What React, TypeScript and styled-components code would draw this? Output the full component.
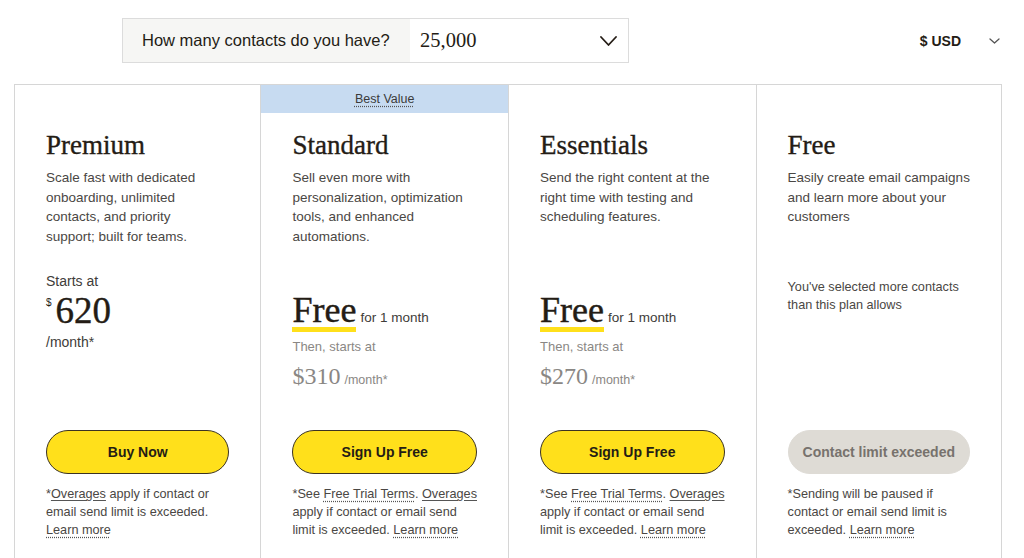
import React from "react";
import styled, { createGlobalStyle } from "styled-components";

const GlobalStyle = createGlobalStyle`
  html, body {
    margin: 0;
    padding: 0;
    overflow: hidden;
    background: #ffffff;
  }
  body {
    font-family: "Liberation Sans", Arial, sans-serif;
    color: #241c15;
  }
  * {
    box-sizing: border-box;
  }
`;

const SERIF = `"Liberation Serif", "Times New Roman", serif`;

type PlanKind = "starts" | "trial" | "limit";

interface Plan {
  name: string;
  description: string[];
  featured?: boolean;
  kind: PlanKind;
  price?: string;
  thenPrice?: string;
  button: string;
  disabled?: boolean;
  note: React.ReactNode;
}

const TopBar = styled.div`
  display: flex;
  align-items: center;
  justify-content: space-between;
  padding: 18px 24px 0 122px;
  width: 1024px;
`;

const ContactSelect = styled.div`
  display: flex;
  height: 45px;
  border: 1px solid #dcdcdc;
`;

const SelectLabel = styled.div`
  display: flex;
  align-items: center;
  width: 287px;
  padding-left: 19px;
  background: #f6f6f4;
  font-size: 16.5px;
  color: #241c15;
`;

const SelectValue = styled.div`
  display: flex;
  align-items: center;
  justify-content: space-between;
  width: 218px;
  padding: 0 11px 0 10px;
  font-family: ${SERIF};
  font-size: 20.5px;
  color: #241c15;
`;

const Currency = styled.div`
  display: flex;
  align-items: center;
  gap: 28px;
  font-size: 14px;
  font-weight: 700;
  color: #241c15;
`;

const Plans = styled.div`
  display: grid;
  grid-template-columns: repeat(4, 1fr);
  width: 988px;
  margin: 21px 0 0 14px;
  border: 1px solid #d6d6d6;
`;

const Column = styled.div`
  display: flex;
  flex-direction: column;
  padding: 0 31px 30px;
  & + & {
    border-left: 1px solid #d6d6d6;
  }
`;

const BannerSlot = styled.div<{ $show: boolean }>`
  display: flex;
  align-items: center;
  justify-content: center;
  height: 28px;
  margin: 0 -31px;
  background: ${({ $show }) => ($show ? "#c7dbf1" : "transparent")};
  font-size: 12.5px;
  color: #3a3a3a;
`;

const Dotted = styled.span`
  text-decoration: underline dotted #555;
  text-underline-offset: 3px;
`;

const Solid = styled.span`
  text-decoration: underline solid #555;
  text-underline-offset: 2px;
`;

const Title = styled.h2`
  margin: 16px 0 0;
  font-family: ${SERIF};
  font-weight: 400;
  font-size: 27px;
  line-height: 32px;
  color: #241c15;
  -webkit-text-stroke: 0.35px #241c15;
`;

const Description = styled.p`
  margin: 7px 0 0;
  height: 78px;
  font-size: 13.5px;
  line-height: 19.5px;
  color: #4a4744;
`;

const PriceArea = styled.div<{ $kind: PlanKind }>`
  height: 184px;
  padding-top: ${({ $kind }) =>
    $kind === "starts" ? "25px" : $kind === "trial" ? "47px" : "32px"};
`;

const StartsLabel = styled.div`
  font-size: 14px;
  line-height: 20px;
  color: #403c39;
`;

const BigPrice = styled.div`
  display: flex;
  align-items: flex-start;
  height: 40px;
  font-family: ${SERIF};
  font-size: 37px;
  line-height: 40px;
  color: #241c15;
  -webkit-text-stroke: 0.4px #241c15;
`;

const Sup = styled.span`
  font-family: "Liberation Sans", Arial, sans-serif;
  font-size: 10px;
  line-height: 20px;
  margin-top: 2px;
  margin-right: 4px;
  -webkit-text-stroke: 0;
`;

const PerMonth = styled.div`
  font-size: 14px;
  line-height: 22px;
  color: #403c39;
`;

const FreeRow = styled.div`
  display: flex;
  align-items: baseline;
  gap: 4px;
`;

const FreeWord = styled.span`
  display: inline-block;
  font-family: ${SERIF};
  font-size: 36px;
  line-height: 34px;
  color: #241c15;
  -webkit-text-stroke: 0.45px #241c15;
  border-bottom: 5px solid #ffe01b;
`;

const FreeFor = styled.span`
  font-size: 13.5px;
  color: #403c39;
`;

const ThenLabel = styled.div`
  margin-top: 6px;
  font-size: 13px;
  line-height: 18px;
  color: #8a8784;
`;

const ThenRow = styled.div`
  display: flex;
  align-items: baseline;
  gap: 4px;
  margin-top: 5px;
`;

const ThenPrice = styled.span`
  font-family: ${SERIF};
  font-size: 24px;
  line-height: 30px;
  color: #8a8784;
`;

const ThenPer = styled.span`
  font-size: 12.5px;
  color: #8a8784;
`;

const LimitText = styled.p`
  margin: 0;
  font-size: 12.7px;
  line-height: 18px;
  color: #4a4744;
`;

const ActionButton = styled.button<{ $disabled?: boolean }>`
  height: 44px;
  width: 100%;
  border-radius: 22px;
  border: 1px solid ${({ $disabled }) => ($disabled ? "#dedbd5" : "#3b3322")};
  background: ${({ $disabled }) => ($disabled ? "#dedbd5" : "#ffe01b")};
  color: ${({ $disabled }) => ($disabled ? "#77726d" : "#241c15")};
  font-family: "Liberation Sans", Arial, sans-serif;
  font-size: 14px;
  font-weight: 700;
  cursor: ${({ $disabled }) => ($disabled ? "default" : "pointer")};
`;

const Footnote = styled.p`
  margin: 11px 0 0;
  font-size: 12.7px;
  line-height: 18px;
  color: #4a4744;
  white-space: nowrap;
`;

const Chevron = ({ width, height, stroke, color }: { width: number; height: number; stroke: number; color: string }) => (
  <svg width={width} height={height} viewBox={`0 0 ${width} ${height}`} fill="none">
    <polyline
      points={`1,1 ${width / 2},${height - 1} ${width - 1},1`}
      stroke={color}
      strokeWidth={stroke}
      strokeLinecap="round"
      strokeLinejoin="round"
    />
  </svg>
);

const plans: Plan[] = [
  {
    name: "Premium",
    description: ["Scale fast with dedicated", "onboarding, unlimited", "contacts, and priority", "support; built for teams."],
    kind: "starts",
    price: "620",
    button: "Buy Now",
    note: (
      <>
        *<Solid>Overages</Solid> apply if contact or
        <br />
        email send limit is exceeded.
        <br />
        <Dotted>Learn more</Dotted>
      </>
    ),
  },
  {
    name: "Standard",
    description: ["Sell even more with", "personalization, optimization", "tools, and enhanced", "automations."],
    featured: true,
    kind: "trial",
    thenPrice: "$310",
    button: "Sign Up Free",
    note: (
      <>
        *See <Dotted>Free Trial Terms</Dotted>. <Solid>Overages</Solid>
        <br />
        apply if contact or email send
        <br />
        limit is exceeded. <Dotted>Learn more</Dotted>
      </>
    ),
  },
  {
    name: "Essentials",
    description: ["Send the right content at the", "right time with testing and", "scheduling features."],
    kind: "trial",
    thenPrice: "$270",
    button: "Sign Up Free",
    note: (
      <>
        *See <Dotted>Free Trial Terms</Dotted>. <Solid>Overages</Solid>
        <br />
        apply if contact or email send
        <br />
        limit is exceeded. <Dotted>Learn more</Dotted>
      </>
    ),
  },
  {
    name: "Free",
    description: ["Easily create email campaigns", "and learn more about your", "customers"],
    kind: "limit",
    button: "Contact limit exceeded",
    disabled: true,
    note: (
      <>
        *Sending will be paused if
        <br />
        contact or email send limit is
        <br />
        exceeded. <Dotted>Learn more</Dotted>
      </>
    ),
  },
];

const PriceBlock = ({ plan }: { plan: Plan }) => {
  if (plan.kind === "starts") {
    return (
      <>
        <StartsLabel>Starts at</StartsLabel>
        <BigPrice>
          <Sup>$</Sup>
          {plan.price}
        </BigPrice>
        <PerMonth>/month*</PerMonth>
      </>
    );
  }
  if (plan.kind === "trial") {
    return (
      <>
        <FreeRow>
          <FreeWord>Free</FreeWord>
          <FreeFor>for 1 month</FreeFor>
        </FreeRow>
        <ThenLabel>Then, starts at</ThenLabel>
        <ThenRow>
          <ThenPrice>{plan.thenPrice}</ThenPrice>
          <ThenPer>/month*</ThenPer>
        </ThenRow>
      </>
    );
  }
  return (
    <LimitText>
      You've selected more contacts
      <br />
      than this plan allows
    </LimitText>
  );
};

const App = () => {
  return (
    <>
      <GlobalStyle />
      <TopBar>
        <ContactSelect>
          <SelectLabel>How many contacts do you have?</SelectLabel>
          <SelectValue>
            25,000
            <Chevron width={17} height={10} stroke={1.8} color="#241c15" />
          </SelectValue>
        </ContactSelect>
        <Currency>
          $ USD
          <Chevron width={11} height={6} stroke={1.3} color="#555" />
        </Currency>
      </TopBar>
      <Plans>
        {plans.map((plan) => (
          <Column key={plan.name}>
            <BannerSlot $show={!!plan.featured}>
              {plan.featured && <Dotted>Best Value</Dotted>}
            </BannerSlot>
            <Title>{plan.name}</Title>
            <Description>
              {plan.description.map((line, i) => (
                <React.Fragment key={i}>
                  {i > 0 && <br />}
                  {line}
                </React.Fragment>
              ))}
            </Description>
            <PriceArea $kind={plan.kind}>
              <PriceBlock plan={plan} />
            </PriceArea>
            <ActionButton $disabled={plan.disabled}>{plan.button}</ActionButton>
            <Footnote>{plan.note}</Footnote>
          </Column>
        ))}
      </Plans>
    </>
  );
};

export default App;
